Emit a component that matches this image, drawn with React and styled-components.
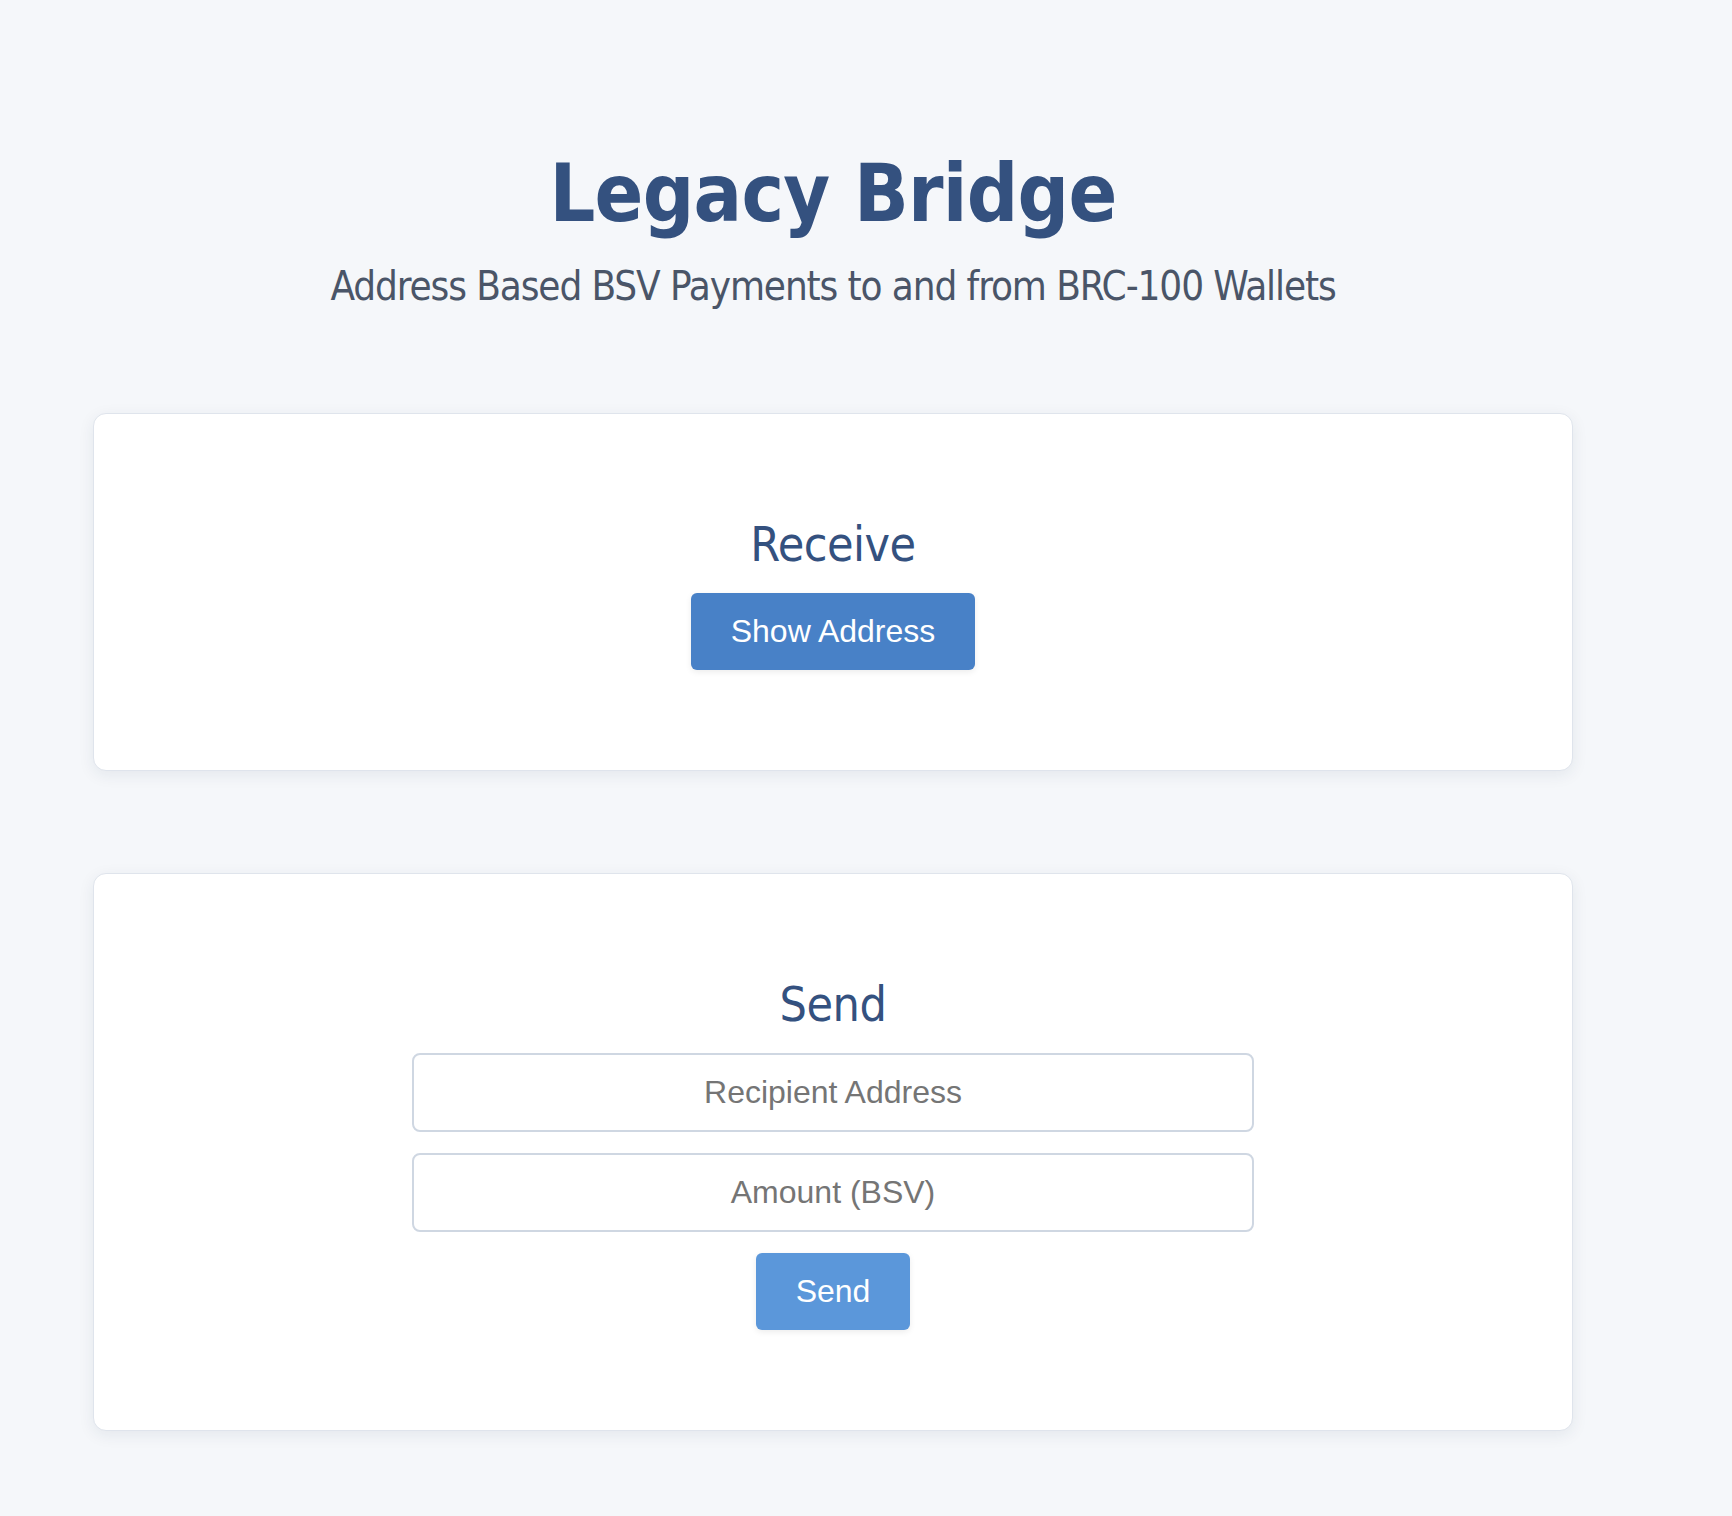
import React from "react";
import styled, { createGlobalStyle } from "styled-components";

const GlobalStyle = createGlobalStyle`
  html, body {
    margin: 0;
    padding: 0;
    background: #f5f7fa;
  }
  body {
    font-family: "DejaVu Sans Condensed", "DejaVu Sans", sans-serif;
  }
  * { box-sizing: border-box; }
`;

const Page = styled.div`
  width: 1666px;
  min-height: 1516px;
  padding: 147px 0 80px;
`;

const Header = styled.header`
  display: flex;
  flex-direction: column;
  align-items: center;
  margin-bottom: 104px;
`;

const Title = styled.h1`
  margin: 0;
  font-family: "DejaVu Sans Condensed", "DejaVu Sans", sans-serif;
  font-weight: 700;
  font-size: 80px;
  letter-spacing: -0.7px;
  color: #34517f;
  line-height: normal;
`;

const Subtitle = styled.p`
  margin: 23px 0 0;
  font-family: "DejaVu Sans Condensed", "DejaVu Sans", sans-serif;
  font-size: 40px;
  letter-spacing: -1.1px;
  color: #4a5568;
  line-height: normal;
`;

const Main = styled.main`
  width: 1480px;
  margin: 0 auto;
  display: flex;
  flex-direction: column;
  gap: 102px;
`;

const Card = styled.section`
  background: #ffffff;
  border: 1px solid #dfe4ec;
  border-radius: 13px;
  box-shadow: 0 4px 16px rgba(30, 45, 80, 0.08);
  padding: 102px 0 100px;
  display: flex;
  flex-direction: column;
  align-items: center;
  gap: 21px;
`;

const CardTitle = styled.h2`
  margin: 0;
  font-family: "DejaVu Sans Condensed", "DejaVu Sans", sans-serif;
  font-weight: 400;
  font-size: 48px;
  letter-spacing: -0.5px;
  line-height: normal;
  color: #34517f;
`;

const Button = styled.button`
  font-family: "Liberation Sans", Arial, sans-serif;
  font-size: 32px;
  line-height: normal;
  color: #ffffff;
  background: ${(p) => (p.$light ? "#5b97da" : "#4881c7")};
  border: none;
  border-radius: 6px;
  padding: 20px 40px;
  box-shadow: 0 2px 6px rgba(0, 0, 0, 0.08);
  cursor: pointer;
`;

const Input = styled.input`
  width: 842px;
  height: 79px;
  font-family: "Liberation Sans", Arial, sans-serif;
  font-size: 32px;
  text-align: center;
  color: #333;
  background: #ffffff;
  border: 2px solid #cfd7e2;
  border-radius: 8px;
  padding: 0 20px;
  outline: none;
  &::placeholder {
    color: #757575;
  }
`;

export default function App() {
  return (
    <>
      <GlobalStyle />
      <Page>
        <Header>
          <Title>Legacy Bridge</Title>
          <Subtitle>Address Based BSV Payments to and from BRC-100 Wallets</Subtitle>
        </Header>
        <Main>
          <Card>
            <CardTitle>Receive</CardTitle>
            <Button>Show Address</Button>
          </Card>
          <Card>
            <CardTitle>Send</CardTitle>
            <Input placeholder="Recipient Address" />
            <Input placeholder="Amount (BSV)" />
            <Button $light>Send</Button>
          </Card>
        </Main>
      </Page>
    </>
  );
}
